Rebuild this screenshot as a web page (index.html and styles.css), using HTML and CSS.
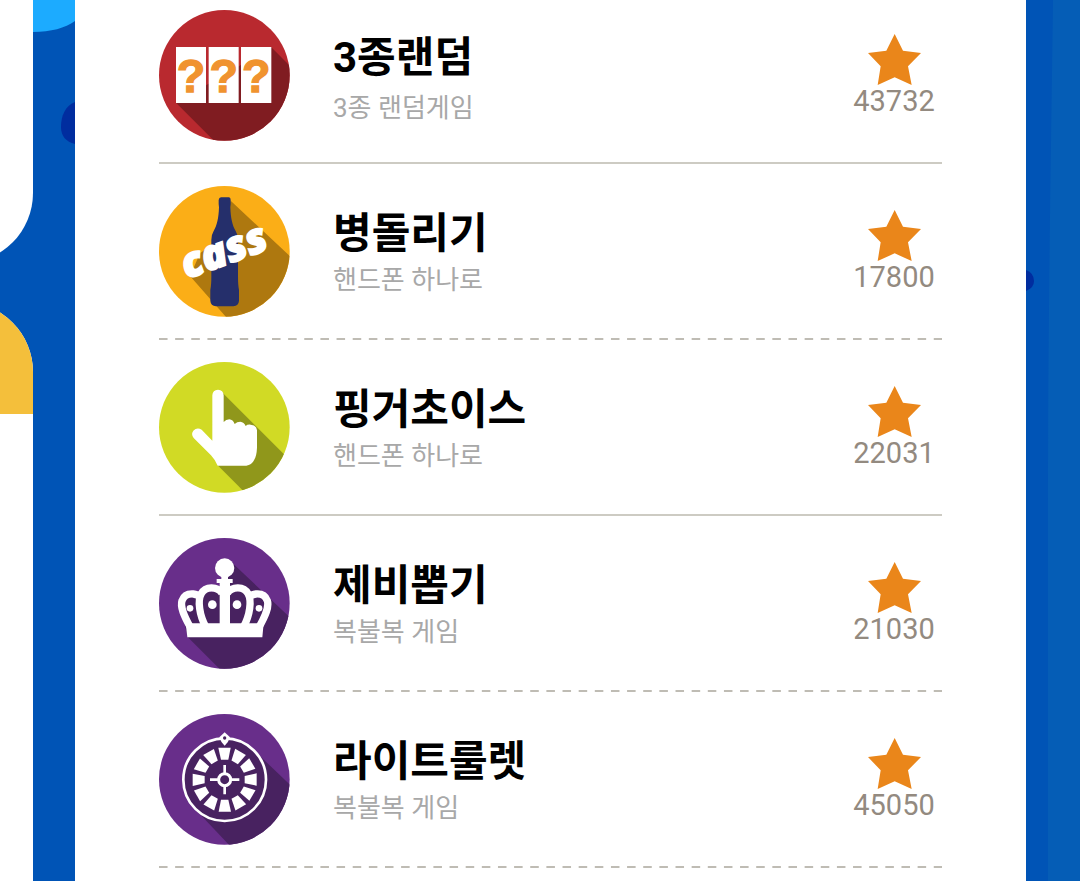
FILE: index.html
```html
<!DOCTYPE html>
<html lang="ko">
<head>
  <meta charset="UTF-8" />
  <meta name="viewport" content="width=device-width, initial-scale=1" />
  <title>게임 목록</title>
  <link rel="stylesheet" href="styles.css">
</head>
<body>
  <!-- 공용 도형 -->
  <svg class="defs" width="0" height="0" aria-hidden="true">
    <defs>
      <clipPath id="round"><circle cx="223" cy="224" r="196" /></clipPath>
      <path id="slot" d="M205 129 H242 L235 165 H213 Z" />
      <symbol id="star" viewBox="0 0 159 153">
        <path d="M80 0 L105 50 L159 57 L120 97 L131 153 L80 130 L29 153 L38 97 L0 57 L55 50 Z" />
      </symbol>
    </defs>
  </svg>

  <div class="page">
    <aside class="side">
      <div class="side-card"></div>
      <div class="side-card open">
        <div class="side-head"></div>
      </div>
    </aside>

    <div class="gutter">
      <svg width="42" height="150" viewBox="0 0 42 150" aria-hidden="true">
        <path fill="#1cabff" d="M0 0 H42 V21 C32 28 18 32 0 32 Z" />
        <path fill="#002d9f" d="M42 102 C32 106 28 116 28 127 C28 136 33 142 42 144 Z" />
      </svg>
    </div>

    <main class="board">
      <ul class="games">
        <li class="game solid">
          <svg class="icon" viewBox="27 28 393 393" aria-hidden="true">
            <g clip-path="url(#round)">
              <rect x="20" y="20" width="410" height="410" fill="#b9292f" />
              <path fill="#801c21" d="M78 306 L192 420 H430 V206 L364 140 Z" />
            </g>
            <path fill="#fff" d="M78 139 H168 V307 H78 Z M176 139 H266 V307 H176 Z M273 139 H364 V307 H273 Z" />
            <g class="quiz">
              <text x="123" y="274">?</text>
              <text x="221" y="274">?</text>
              <text x="319" y="274">?</text>
            </g>
          </svg>
          <div class="info">
            <h2>3종랜덤</h2>
            <p>3종 랜덤게임</p>
          </div>
          <div class="score">
            <svg class="star" aria-hidden="true"><use href="#star" /></svg>
            <span>43732</span>
          </div>
        </li>

        <li class="game dashed">
          <svg class="icon" viewBox="27 28 393 393" aria-hidden="true">
            <g clip-path="url(#round)">
              <rect x="20" y="20" width="410" height="410" fill="#fbae17" />
              <path fill="#ae780f" d="M242 72 L430 248 V430 H236 L120 298 L150 230 L205 190 Z" />
            </g>
            <path fill="#252f6b" d="M213 62 H237 Q242 63 242 70 V82 L241 92 C242 125 247 146 257 163 Q264 174 264 190 V300 Q264 325 267 340 V372 Q266 387 250 389 H198 Q182 387 181 372 V340 Q184 325 184 300 V190 Q184 174 191 163 C201 146 206 125 207 92 L206 82 V70 Q207 63 213 62 Z" />
            <text class="cass" transform="rotate(-20 223 225)" x="222" y="264">cass</text>
          </svg>
          <div class="info">
            <h2>병돌리기</h2>
            <p>핸드폰 하나로</p>
          </div>
          <div class="score">
            <svg class="star" aria-hidden="true"><use href="#star" /></svg>
            <span>17800</span>
          </div>
        </li>

        <li class="game solid">
          <svg class="icon" viewBox="27 28 393 393" aria-hidden="true">
            <g clip-path="url(#round)">
              <rect x="20" y="20" width="410" height="410" fill="#d1da25" />
              <path fill="#90971b" d="M216 119 L430 333 V430 H295 L203 338 Z" />
            </g>
            <path fill="#fff" d="M187 128 Q188 112 204 111 Q220 112 221 128 V208 Q228 200 238 200 Q249 201 254 214 Q261 207 271 207 Q282 208 287 220 Q292 215 302 216 Q320 218 321 233 V285 Q320 310 312 323 Q305 338 289 339 H203 Q196 322 183 308 L131 256 Q122 245 130 234 Q141 223 155 231 L187 264 Z" />
          </svg>
          <div class="info">
            <h2>핑거초이스</h2>
            <p>핸드폰 하나로</p>
          </div>
          <div class="score">
            <svg class="star" aria-hidden="true"><use href="#star" /></svg>
            <span>22031</span>
          </div>
        </li>

        <li class="game dashed">
          <svg class="icon" viewBox="27 28 393 393" aria-hidden="true">
            <g clip-path="url(#round)">
              <rect x="20" y="20" width="410" height="410" fill="#682e8a" />
              <path fill="#482260" d="M244 100 L430 276 V430 H218 L113 325 L90 230 L130 190 H220 Z" />
            </g>
            <g fill="#fff">
              <circle cx="224" cy="118" r="29" />
              <path d="M214 140 H234 V151 H248 V163 H240 V290 H209 V163 H200 V151 H214 Z" />
              <path d="M107 284 H341 L337 326 H112 Z" />
              <circle cx="120" cy="239" r="10" />
              <circle cx="187" cy="228" r="13" />
              <circle cx="261" cy="228" r="13" />
              <circle cx="327" cy="239" r="10" />
            </g>
            <g fill="none" stroke="#fff" stroke-width="22">
              <path d="M121 296 C102 262 90 235 96 216 Q104 194 130 196 Q142 197 152 206" />
              <path d="M327 296 C346 262 358 235 352 216 Q344 194 318 196 Q306 197 296 206" />
              <path d="M168 296 C148 260 142 215 154 195 C166 172 202 172 216 194" />
              <path d="M280 296 C300 260 306 215 294 195 C282 172 246 172 232 194" />
            </g>
          </svg>
          <div class="info">
            <h2>제비뽑기</h2>
            <p>복불복 게임</p>
          </div>
          <div class="score">
            <svg class="star" aria-hidden="true"><use href="#star" /></svg>
            <span>21030</span>
          </div>
        </li>

        <li class="game dashed">
          <svg class="icon" viewBox="27 28 393 393" aria-hidden="true">
            <g clip-path="url(#round)">
              <rect x="20" y="20" width="410" height="410" fill="#682e8a" />
              <path fill="#482260" d="M312 137 L430 250 V430 H246 L136 314 Z" />
            </g>
            <circle cx="224" cy="225" r="124" fill="#482260" stroke="#fff" stroke-width="8" />
            <path fill="#fff" d="M224 83 L240 98 Q236 112 224 123 Q212 112 208 98 Z" />
            <circle cx="224" cy="100" r="5" fill="#482260" />
            <g fill="#fff">
              <use href="#slot" />
              <use href="#slot" transform="rotate(30 224 225)" />
              <use href="#slot" transform="rotate(60 224 225)" />
              <use href="#slot" transform="rotate(90 224 225)" />
              <use href="#slot" transform="rotate(120 224 225)" />
              <use href="#slot" transform="rotate(150 224 225)" />
              <use href="#slot" transform="rotate(180 224 225)" />
              <use href="#slot" transform="rotate(210 224 225)" />
              <use href="#slot" transform="rotate(240 224 225)" />
              <use href="#slot" transform="rotate(270 224 225)" />
              <use href="#slot" transform="rotate(300 224 225)" />
              <use href="#slot" transform="rotate(330 224 225)" />
            </g>
            <path stroke="#fff" stroke-width="8" d="M224 181 V269 M180 225 H268" />
            <circle cx="224" cy="225" r="18" fill="#482260" stroke="#fff" stroke-width="9" />
          </svg>
          <div class="info">
            <h2>라이트룰렛</h2>
            <p>복불복 게임</p>
          </div>
          <div class="score">
            <svg class="star" aria-hidden="true"><use href="#star" /></svg>
            <span>45050</span>
          </div>
        </li>
      </ul>
    </main>

    <div class="gutter">
      <svg width="54" height="100%" aria-hidden="true">
        <path fill="#055db6" d="M27 0 C25 150 22 320 22 500 V3000 H54 V0 Z" />
        <path fill="#002d9f" d="M0 270 Q8 273 8 281 Q8 288 0 291 Z" />
      </svg>
    </div>
  </div>
</body>
</html>
```

FILE: styles.css
```css
* {
  box-sizing: border-box;
}

body {
  margin: 0;
  background: #0054b6;
  font-family: Roboto, "Noto Sans CJK KR", sans-serif;
}

.defs {
  display: block;
}

.page {
  display: grid;
  grid-template-columns: 33px 42px 1fr 54px;
  min-height: 100vh;
}

/* 왼쪽 카드 */
.side {
  display: flex;
  flex-direction: column;
  gap: 39px;
  overflow: hidden;
}

.side-card {
  height: 263px;
  margin-left: -200px;
  border-radius: 0 0 70px 70px;
  background: #fff;
}

.side-card.open {
  flex: 1;
  border-radius: 70px 70px 0 0;
  overflow: hidden;
}

.side-head {
  height: 112px;
  background: #f4bf3b;
}

.gutter svg {
  display: block;
}

/* 게임 목록 */
.board {
  padding: 0 84px;
  background: #fff;
}

.games {
  margin: 0;
  padding: 0;
  list-style: none;
}

.game {
  display: flex;
  align-items: center;
  gap: 43px;
  padding: 22px 0 21px;
}

.game:first-child {
  padding-top: 10px;
}

.game.solid {
  border-bottom: 2px solid #cdcbc3;
}

.game.dashed {
  padding-bottom: 23px;
  background: linear-gradient(90deg, #bfbcb4 50%, transparent 50%) left bottom / calc((100% - 8px) / 48) 2px repeat-x;
}

.icon {
  flex: none;
  width: 131px;
  height: 131px;
}

.quiz {
  fill: #f0932f;
  stroke: #f0932f;
  stroke-width: 4px;
  font-family: "Liberation Sans", sans-serif;
  font-size: 140px;
  font-weight: bold;
  text-anchor: middle;
}

.cass {
  fill: #fff;
  stroke: #fff;
  stroke-width: 5px;
  font-family: "Open Sans", sans-serif;
  font-size: 126px;
  font-style: italic;
  font-weight: 800;
  text-anchor: middle;
}

.info {
  flex: 1;
}

.info h2 {
  margin: 0;
  color: #000;
  font-size: 42px;
  font-weight: bold;
  line-height: 56px;
}

.info p {
  margin: 0;
  color: #a8a8a8;
  font-size: 26px;
  line-height: 36px;
}

/* 첫 줄은 제목과 설명 사이가 조금 넓다 */
.game:first-child .info {
  padding-top: 4px;
}

.game:first-child p {
  margin-top: 4px;
}

.score {
  display: flex;
  flex-direction: column;
  align-items: center;
  width: 96px;
  color: #938a80;
  font-size: 29px;
  line-height: 32px;
}

.star {
  width: 53px;
  height: 51px;
  fill: #ea861a;
}
```
